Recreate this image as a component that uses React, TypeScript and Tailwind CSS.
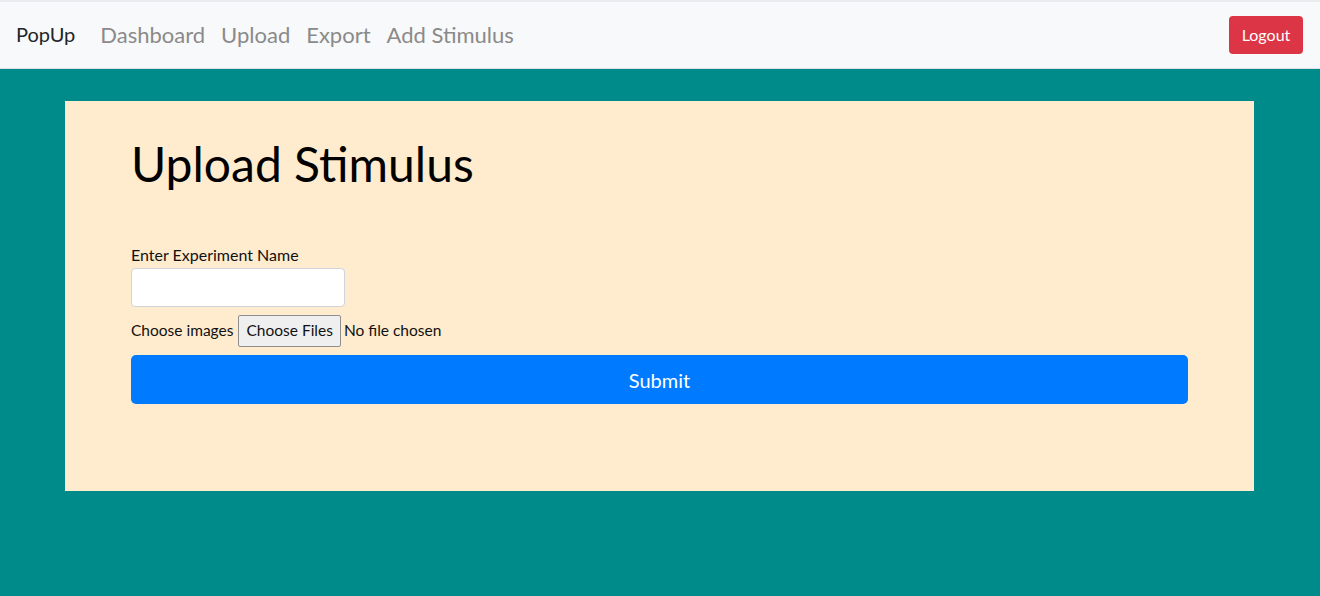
import React from "react";

export default function App() {
  const font = { fontFamily: "Lato, 'Noto Sans', 'Liberation Sans', sans-serif" };
  return (
    <div className="min-h-[596px] w-full bg-[#008b8b]" style={font}>
      <div className="h-[2px] bg-[#e9ecef]" />
      <nav className="flex h-[67px] items-center justify-between border-b border-[#dee2e6] bg-[#f8f9fa] pb-[2px] pl-4 pr-[17px]">
        <div className="flex items-center">
          <span className="mr-[25px] text-[20px] text-[#212529]">PopUp</span>
          <div className="flex items-center gap-[16px] text-[22px] text-[#8a8a8a]">
            <span>Dashboard</span>
            <span>Upload</span>
            <span>Export</span>
            <span>Add Stimulus</span>
          </div>
        </div>
        <button className="mt-[2px] h-[38px] w-[74px] rounded-[4px] bg-[#dc3545] text-[16px] text-white">Logout</button>
      </nav>
      <div className="pl-[65px] pr-[66px] pt-[32px]">
        <div className="h-[390px] bg-[#ffebcd] px-[66px] pt-[34px]">
          <h1 className="text-[48px] leading-[58px] text-black">Upload Stimulus</h1>
          <div className="mt-[50px] text-[16px] leading-[24px] text-[#111]">Enter Experiment Name</div>
          <input className="mt-[1px] block h-[39px] w-[214px] rounded-[4px] border border-[#ced4da] bg-white" />
          <div className="mt-[8px] flex items-center text-[15.5px] text-[#111]">
            <span>Choose images</span>
            <span className="ml-[5px] flex h-[32px] items-center rounded-[2px] border border-[#8f8f8f] bg-[#efefef] px-[7px]">Choose Files</span>
            <span className="ml-[3px]">No file chosen</span>
          </div>
          <button className="mt-[8px] h-[49px] w-full rounded-[5px] bg-[#007bff] text-[20px] text-white">Submit</button>
        </div>
      </div>
    </div>
  );
}
